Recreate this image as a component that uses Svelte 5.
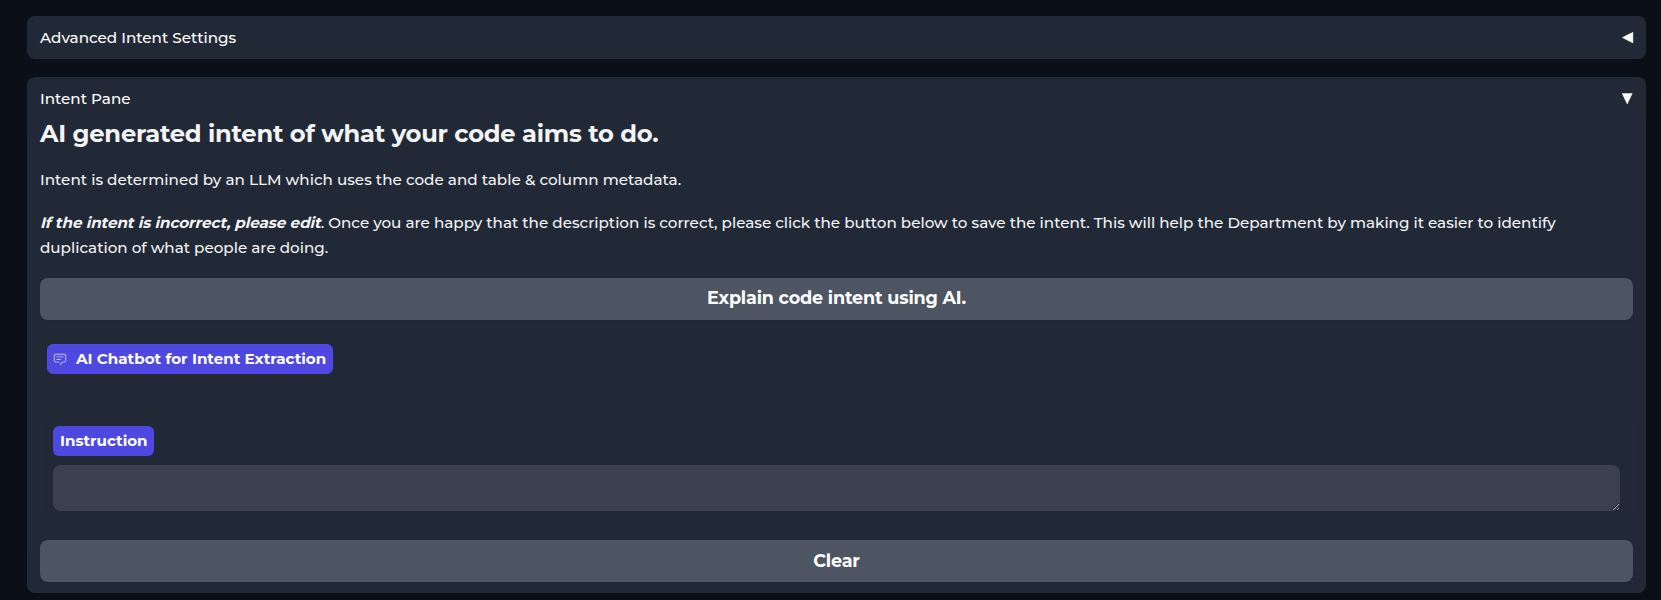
<script>
  let instruction = $state('');
  let settingsOpen = $state(false);
</script>

<main>
  <section class="panel collapsed">
    <button class="toggle" onclick={() => (settingsOpen = !settingsOpen)}>
      <span>Advanced Intent Settings</span>
      <svg width="12" height="12" viewBox="0 0 12 12"><path d="M.4 5.6 10.9.3v10.6Z" fill="#fff" stroke="#fff" stroke-width=".5" stroke-linejoin="round" /></svg>
    </button>
  </section>

  <section class="panel open">
    <button class="toggle">
      <span>Intent Pane</span>
      <svg width="12" height="12" viewBox="0 0 12 12"><path d="M.2.4h10L5.2 11Z" fill="#fff" stroke="#fff" stroke-width=".5" stroke-linejoin="round" /></svg>
    </button>
    <h2>AI generated intent of what your code aims to do.</h2>
    <p class="intro">Intent is determined by an LLM which uses the code and table &amp; column metadata.</p>
    <p class="note"><em>If the intent is incorrect, please edit</em>. Once you are happy that the description is correct, please click the button below to save the intent. This will help the Department by making it easier to identify duplication of what people are doing.</p>
    <button class="action explain">Explain code intent using AI.</button>
    <div class="chat-label">
      <svg width="14" height="14" viewBox="0 0 32 32" fill="#c9c6fa"><path d="M17.74 30 16 29l4-7h6a2 2 0 0 0 2-2V8a2 2 0 0 0-2-2H6a2 2 0 0 0-2 2v12a2 2 0 0 0 2 2h9v2H6a4 4 0 0 1-4-4V8a4 4 0 0 1 4-4h20a4 4 0 0 1 4 4v12a4 4 0 0 1-4 4h-4.84Z" /><path d="M8 10h16v2H8zM8 16h10v2H8z" /></svg>
      <span>AI Chatbot for Intent Extraction</span>
    </div>
    <div class="field">
      <label for="instruction">Instruction</label>
      <textarea id="instruction" bind:value={instruction}></textarea>
    </div>
    <button class="action clear">Clear</button>
  </section>
</main>

<style>
  :global(body) { background: #0b0f19; }
  * { box-sizing: border-box; }
  main {
    height: 600px;
    padding: 16px 15px 0 27px;
    background: linear-gradient(#0b0f18, #0a0e17);
    font-family: Montserrat, Inter, sans-serif;
    font-size: 15.2px;
    font-weight: 500;
    color: #f3f4f6;
    overflow: hidden;
  }
  button { font: inherit; color: #fff; border: 0; padding: 0; background: none; }
  span, em { white-space: nowrap; }
  .panel { background: #222936; border-radius: 8px; padding: 0 13px; }
  .collapsed { height: 43px; padding-top: 10px; margin-bottom: 18px; }
  .open { height: 516px; padding-top: 10px; display: flex; flex-direction: column; }
  .toggle { width: 100%; height: 23px; line-height: 23px; display: flex; align-items: center; justify-content: space-between; }
  .toggle svg { margin-right: -1px; }
  h2 { margin: 6px 0 0; font-size: 24.2px; line-height: 36px; font-weight: 700; letter-spacing: -.23px; }
  p { margin: 0; line-height: 25px; }
  .intro { margin-top: 15px; letter-spacing: .01px; }
  .note { margin-top: 18px; letter-spacing: -.013px; }
  em { display: inline-block; font-style: normal; font-weight: 700; letter-spacing: -.06px; transform: skewX(-14deg); transform-origin: 0 70%; }
  .action { height: 42px; flex: none; border-radius: 8px; background: #4e5562; font-size: 17.6px; font-weight: 700; letter-spacing: -.17px; padding-bottom: 2px; box-shadow: 0 1px 2px #0000000d; }
  .explain { margin-top: 18px; padding-bottom: 4px; }
  .chat-label { align-self: flex-start; margin: 24px 0 0 7px; height: 30px; width: 286px; padding: 0 0 1px 5px; border-radius: 6px; border: 1px solid #514be0; background: #4f48e0; display: flex; align-items: center; gap: 9px; font-size: 15.15px; font-weight: 700; color: #fff; }
  .field { margin-top: 41px; height: 107px; border: 1px solid #242b38; border-radius: 8px; padding: 10px 12px; display: flex; flex-direction: column; align-items: flex-start; }
  label { height: 30px; width: 101px; line-height: 29px; padding-left: 7px; border-radius: 6px; background: #4f48e0; font-size: 15.15px; font-weight: 700; color: #fff; }
  textarea { width: 100%; height: 46px; margin-top: 9px; border: 0; border-radius: 8px; background: #3b4050; color: #fff; font: inherit; padding: 10px; resize: vertical; outline: none; }
  .clear { margin-top: 18px; }
</style>
